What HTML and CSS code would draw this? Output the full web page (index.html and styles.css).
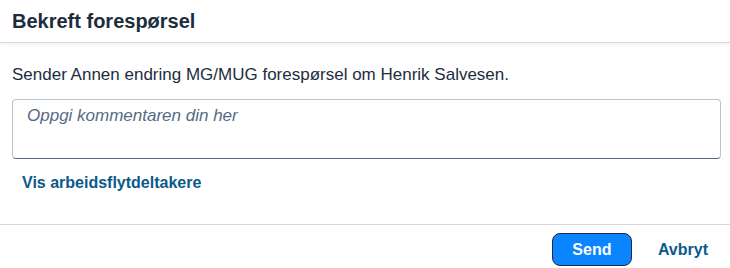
FILE: index.html
```html
<!DOCTYPE html>
<html>
<head>
	<meta charset="UTF-8">
	<title>Bekreft forespørsel</title>
	<link rel="stylesheet" href="styles.css">
</head>
<body>
	<div class="dialog">
		<div class="dialog-header">
			<h1>Bekreft forespørsel</h1>
		</div>
		<div class="dialog-content">
			<p class="message">Sender Annen endring MG/MUG forespørsel om Henrik Salvesen.</p>
			<textarea class="comment" placeholder="Oppgi kommentaren din her"></textarea>
			<a class="link" href="#">Vis arbeidsflytdeltakere</a>
		</div>
		<div class="dialog-footer">
			<button class="btn-send">Send</button>
			<button class="btn-cancel">Avbryt</button>
		</div>
	</div>
</body>
</html>
```

FILE: styles.css
```css
body {
	margin: 0;
	font-family: 'Liberation Sans', Arial, sans-serif;
	background-color: #fff;
	color: #1d2d3e;
}

.dialog {
	width: 730px;
	height: 268px;
	display: flex;
	flex-direction: column;
	overflow: hidden;
}

.dialog-header {
	height: 42px;
	padding: 0 12px;
	display: flex;
	align-items: center;
	border-bottom: 1px solid #d9d9d9;
	box-shadow: 0 2px 3px rgba(0, 0, 0, 0.05);
}

.dialog-header h1 {
	margin: 0;
	font-size: 20px;
	font-weight: bold;
	color: #1d2d3e;
}

.dialog-content {
	padding: 0 9px 0 12px;
	height: 181px;
	display: flex;
	flex-direction: column;
	align-items: flex-start;
	border-bottom: 1px solid #d9d9d9;
}

.message {
	margin: 22px 0 0;
	font-size: 17px;
	line-height: 20px;
}

.comment {
	margin-top: 14px;
	width: 100%;
	height: 60px;
	box-sizing: border-box;
	border: 1px solid #bcc3ca;
	border-bottom-color: #556b82;
	border-radius: 4px;
	padding: 6px 14px;
	font-family: 'Liberation Sans', Arial, sans-serif;
	font-size: 17px;
	resize: none;
	outline: none;
}

.comment::placeholder {
	color: #556b82;
	font-style: italic;
}

.link {
	margin: 15px 0 0 10px;
	font-size: 16px;
	font-weight: bold;
	color: #0b5a8c;
	text-decoration: none;
}

.dialog-footer {
	flex: 1;
	display: flex;
	justify-content: flex-end;
	align-items: flex-end;
	gap: 26px;
	padding: 0 22px 2px 0;
}

.btn-send {
	width: 80px;
	height: 33px;
	background-color: #0a84ff;
	border: 1px solid #1d2d3e;
	border-radius: 8px;
	color: #fff;
	font-family: 'Liberation Sans', Arial, sans-serif;
	font-size: 16px;
	font-weight: bold;
	cursor: pointer;
}

.btn-cancel {
	height: 33px;
	background: none;
	border: none;
	padding: 0;
	color: #0b5a8c;
	font-family: 'Liberation Sans', Arial, sans-serif;
	font-size: 16px;
	font-weight: bold;
	cursor: pointer;
}
```
